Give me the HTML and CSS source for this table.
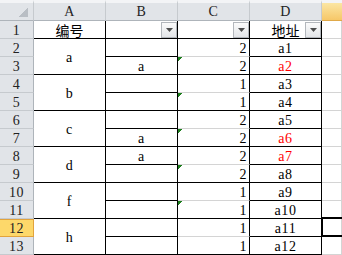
FILE: index.html
```html
<!DOCTYPE html>
<html lang="zh-CN">
<head>
<meta charset="utf-8">
<title>Sheet1</title>
<link rel="stylesheet" href="styles.css">
</head>
<body>
<div class="sheet">
  <!-- column headers -->
  <div class="corner"></div>
  <div class="ch">A</div>
  <div class="ch">B</div>
  <div class="ch">C</div>
  <div class="ch">D</div>
  <div class="ch ch-sel"></div>

  <!-- row 1: filter header -->
  <div class="rh">1</div>
  <div class="c bk-r bk-b ctr cjk">编号</div>
  <div class="c bk-r bk-b filt"><span class="dd"><svg width="7" height="4" viewBox="0 0 7 4"><polygon points="0,0 7,0 3.5,4" fill="#4d4d4d"/></svg></span></div>
  <div class="c bk-r bk-b filt"><span class="dd"><svg width="7" height="4" viewBox="0 0 7 4"><polygon points="0,0 7,0 3.5,4" fill="#4d4d4d"/></svg></span></div>
  <div class="c bk-r bk-b filt ctr cjk"><span class="lbl">地址</span><span class="dd"><svg width="7" height="4" viewBox="0 0 7 4"><polygon points="0,0 7,0 3.5,4" fill="#4d4d4d"/></svg></span></div>
  <div class="c"></div>

  <!-- rows 2-3 -->
  <div class="rh">2</div>
  <div class="c m2 bk-r bk-b ctr mid">a</div>
  <div class="c bk-r bk-b"></div>
  <div class="c bk-r num">2</div>
  <div class="c bk-r bk-b ctr">a1</div>
  <div class="c"></div>

  <div class="rh">3</div>
  <div class="c bk-r bk-b ctr">a</div>
  <div class="c bk-r bk-b num warn">2</div>
  <div class="c bk-r bk-b ctr red">a2</div>
  <div class="c"></div>

  <!-- rows 4-5 -->
  <div class="rh">4</div>
  <div class="c m2 bk-r bk-b ctr mid">b</div>
  <div class="c bk-r bk-b"></div>
  <div class="c bk-r num">1</div>
  <div class="c bk-r bk-b ctr">a3</div>
  <div class="c"></div>

  <div class="rh">5</div>
  <div class="c bk-r bk-b"></div>
  <div class="c bk-r bk-b num warn">1</div>
  <div class="c bk-r bk-b ctr">a4</div>
  <div class="c"></div>

  <!-- rows 6-7 -->
  <div class="rh">6</div>
  <div class="c m2 bk-r bk-b ctr mid">c</div>
  <div class="c bk-r bk-b"></div>
  <div class="c bk-r num">2</div>
  <div class="c bk-r bk-b ctr">a5</div>
  <div class="c"></div>

  <div class="rh">7</div>
  <div class="c bk-r bk-b ctr">a</div>
  <div class="c bk-r bk-b num warn">2</div>
  <div class="c bk-r bk-b ctr red">a6</div>
  <div class="c"></div>

  <!-- rows 8-9 -->
  <div class="rh">8</div>
  <div class="c m2 bk-r bk-b ctr mid">d</div>
  <div class="c bk-r bk-b ctr">a</div>
  <div class="c bk-r num">2</div>
  <div class="c bk-r bk-b ctr red">a7</div>
  <div class="c"></div>

  <div class="rh">9</div>
  <div class="c bk-r bk-b"></div>
  <div class="c bk-r bk-b num warn">2</div>
  <div class="c bk-r bk-b ctr">a8</div>
  <div class="c"></div>

  <!-- rows 10-11 -->
  <div class="rh">10</div>
  <div class="c m2 bk-r bk-b ctr mid">f</div>
  <div class="c bk-r bk-b"></div>
  <div class="c bk-r num">1</div>
  <div class="c bk-r bk-b ctr">a9</div>
  <div class="c"></div>

  <div class="rh">11</div>
  <div class="c bk-r bk-b"></div>
  <div class="c bk-r bk-b num warn">1</div>
  <div class="c bk-r bk-b ctr">a10</div>
  <div class="c"></div>

  <!-- rows 12-13 -->
  <div class="rh rh-sel">12</div>
  <div class="c m2 bk-r bk-b ctr mid">h</div>
  <div class="c bk-r bk-b"></div>
  <div class="c bk-r num">1</div>
  <div class="c bk-r bk-b ctr">a11</div>
  <div class="c active"></div>

  <div class="rh">13</div>
  <div class="c bk-r bk-b"></div>
  <div class="c bk-r bk-b num">1</div>
  <div class="c bk-r bk-b ctr">a12</div>
  <div class="c"></div>
</div>
</body>
</html>
```

FILE: styles.css
```css
html, body {
  margin: 0;
  padding: 0;
  background: #ffffff;
  overflow: hidden;
}

.sheet {
  display: grid;
  grid-template-columns: 34px 72px 72px 72px 72px 1fr;
  grid-template-rows: 21px repeat(13, 18px);
  width: 342px;
  height: 255px;
  font-family: "Liberation Serif", "DejaVu Serif", serif;
  font-size: 14px;
  letter-spacing: 0.6px;
  color: #000;
}

/* ---------- headers ---------- */
.corner,
.ch {
  box-sizing: border-box;
  border-top: 3px solid #f3f4f6;
  border-right: 1px solid #c6cace;
  border-bottom: 1px solid #aeb4ba;
  background: #e1e4e8;
}

.corner {
  background:
    linear-gradient(to top left, #b9bec4 50%, transparent 50%) no-repeat right 5px bottom 3px / 9px 9px,
    #e1e4e8;
}

.ch {
  text-align: center;
  line-height: 18px;
  color: #222;
}

.ch-sel {
  background: linear-gradient(#fbe6a4, #f6c768);
  border-right: none;
  border-bottom-color: #e0a949;
}

.rh {
  box-sizing: border-box;
  border-right: 1px solid #aeb4ba;
  border-bottom: 1px solid #c6cace;
  background: #e1e4e8;
  text-align: center;
  line-height: 20px;
  color: #222;
}

.rh-sel {
  background: #fdd86a;
  border-bottom-color: #e2a33c;
  border-right-color: #e2a33c;
  box-shadow: inset 0 1px 0 #e2a33c;
}

/* ---------- cells ---------- */
.c {
  box-sizing: border-box;
  border-right: 1px solid #d4d4d4;
  border-bottom: 1px solid #d4d4d4;
  line-height: 20px;
  white-space: nowrap;
}

.bk-r { border-right-color: #000; }
.bk-b { border-bottom-color: #000; }

.m2 { grid-row: span 2; }

.ctr { text-align: center; }
.num { text-align: right; padding-right: 2px; }
.red { color: #ff0000; }

.mid {
  display: flex;
  align-items: center;
  justify-content: center;
  padding-top: 2px;
}

.cjk {
  font-family: "Noto Sans CJK SC", "Noto Sans CJK JP", sans-serif;
  font-size: 14px;
  letter-spacing: 0;
  line-height: 16px;
  padding-top: 1px;
}

/* number-stored-as-text marker in the top-left corner */
.warn {
  background: linear-gradient(135deg, #1c7d1c 3px, transparent 3px) no-repeat 0 0 / 6px 6px;
}

/* ---------- autofilter buttons ---------- */
.filt {
  display: grid;
  grid-template-columns: 1fr;
}

.filt > * {
  grid-area: 1 / 1;
}

.lbl {
  justify-self: center;
}

.dd {
  justify-self: end;
  align-self: end;
  box-sizing: border-box;
  width: 16px;
  height: 16px;
  border: 1px solid #b3b7bc;
  background: linear-gradient(#fbfbfb, #e3e5e8);
  display: flex;
  align-items: center;
  justify-content: center;
}

.dd svg { display: block; }

/* ---------- active cell ---------- */
.active {
  position: relative;
}

.active::after {
  content: "";
  position: absolute;
  left: -1px;
  top: -2px;
  right: -4px;
  bottom: -1px;
  border: 2px solid #000;
}
```
